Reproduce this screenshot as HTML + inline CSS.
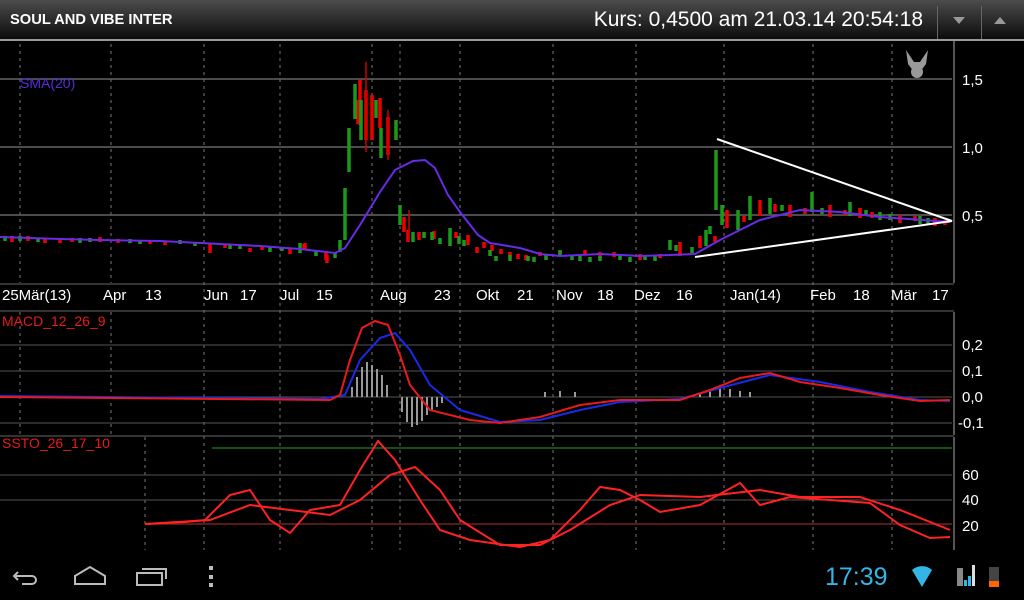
<!DOCTYPE html>
<html><head><meta charset="utf-8"><style>
body{margin:0;width:1024px;height:600px;background:#000;overflow:hidden;font-family:"Liberation Sans",sans-serif;position:relative}
.top{position:absolute;left:0;top:0;width:1024px;height:39px;background:linear-gradient(#4c4c4c,#0c0c0c);border-bottom:2px solid #9a9a9a}
.t1{position:absolute;left:10px;top:11px;color:#fff;font-weight:bold;font-size:15px;transform:scaleX(.98);transform-origin:left}
.t2{position:absolute;right:101px;top:8px;color:#fff;font-size:21px;transform:scaleX(1.0);transform-origin:right}
.sep{position:absolute;top:6px;width:1px;height:33px;background:#666}
.ax{position:absolute;color:#fff;font-size:15px}
.xl{position:absolute;top:287px;color:#fff;font-size:15px}
.lab{position:absolute;font-size:14px}
</style></head><body>
<div class="top"><div class="t1">SOUL AND VIBE INTER</div><div class="t2">Kurs: 0,4500 am 21.03.14 20:54:18</div>
<div class="sep" style="left:937px"></div><div class="sep" style="left:981px"></div>
<svg style="position:absolute;left:950px;top:15px" width="70" height="12"><path d="M3 2h12l-6 7z" fill="#999"/><path d="M44 9h12l-6-7z" fill="#999"/></svg></div>
<svg style="position:absolute;left:0;top:0" width="1024" height="600">
<g stroke="#777" stroke-dasharray="3,4" stroke-width="1">
<path d="M20 44V283M111 44V283M204 44V550M280 44V550M372 44V550M400 44V550M460 44V550M553 44V550M636 44V550M724 44V550M813 44V550M892 44V550M145 437V550"/>
<path d="M20 312V435M111 312V435"/>
</g>
<g stroke="#666" stroke-width="1.5"><path d="M0 79H952M0 147H952M0 215H952"/></g>
<g stroke="#555"><path d="M0 345H952M0 371H952M0 397H952M0 423H952M0 475H952M0 500H952"/></g>
<path d="M954 41V283M954 312V435M954 437V550" stroke="#aaa"/>
<path d="M0 284H954M0 311H954M0 436H954" stroke="#666"/>
<path d="M212 448H952" stroke="#1a6a1a" stroke-width="1.5"/>
<path d="M145 524H952" stroke="#7a2020" stroke-width="1.5"/>
<!-- candles -->
<g stroke-width="3.5">
<path stroke="#e00" d="M12 236v6M28 236v5M45 238v5M60 239v4M72 238v4M100 237v5M118 239v4M150 240v4M165 241v4M210 243v10M225 244v4M250 248v4M262 246v4M290 248v6M304 244v6M326 252v8M305 243v6M327 255v8M358 100v24M360 80v45M366 90v50M372 95v45M380 98v30M388 117v38M404 217v15M408 230v12M419 232v8M434 231v8M456 232v6M468 235v10M477 247v6M484 242v6M492 245v6M501 249v5M510 252v5M518 254v5M526 255v5M540 252v4M560 251v4M585 250v4M600 252v6M614 252v5M640 254v6M660 254v4M680 242v14M700 236v12M715 236v6M727 210v18M744 216v6M760 200v16M775 204v8M790 205v12M805 208v6M830 205v12M845 210v5M860 208v10M872 212v6M900 215v8M915 216v5M935 218v8M945 220v5"/>
<path stroke="#1a9a1a" d="M5 236v5M20 236v5M38 238v4M80 238v5M90 238v4M130 239v4M140 240v4M180 240v4M195 242v4M230 244v5M240 245v4M270 247v5M282 247v4M300 243v10M316 250v6M335 252v6M340 240v12M345 188v52M349 128v44M355 84v35M361 100v40M376 100v18M381 128v30M396 120v20M400 205v20M413 232v10M424 232v6M432 232v8M440 238v6M450 228v18M459 236v8M464 240v6M490 250v6M496 256v5M510 255v6M528 256v5M534 257v5M546 255v5M560 250v6M572 255v5M580 256v5M590 257v5M600 256v5M620 255v5M630 257v5M645 255v5M655 256v5M670 240v10M676 245v6M692 247v6M706 230v16M710 226v8M716 150v60M722 205v20M738 210v20M750 196v24M770 198v16M782 205v6M812 192v20M822 208v6M850 202v14M866 210v6M880 212v8M890 214v6M920 216v8M928 218v6"/>
<path stroke="#c00" stroke-width="1.5" d="M366 62v90M388 110v50M409 210v30"/>
</g>
<polyline fill="none" stroke="#6a2ae8" stroke-width="2" points="0,237 60,239 100,240 160,241 200,243 260,246 300,249 335,253 345,248 360,225 380,192 395,170 413,161 425,160 435,168 448,195 460,212 478,235 490,243 520,248 540,254 560,256 600,254 640,256 670,255 695,254 720,240 760,220 800,210 840,212 880,217 950,222"/>
<path d="M717 139L952 221L695 257" fill="none" stroke="#fff" stroke-width="2"/>
<!-- MACD -->
<g stroke="#999" stroke-width="2"><path d="M352 397v-10M357 397v-20M362 397v-30M367 397v-35M372 397v-32M377 397v-28M382 397v-22M387 397v-12M402 397v15M407 397v25M412 397v30M417 397v28M422 397v24M427 397v18M432 397v14M437 397v10M442 397v6M700 397v-3M710 397v-6M720 397v-10M730 397v-8M740 397v-6M750 397v-5M545 397v-5M560 397v-6M575 397v-5"/></g>
<polyline fill="none" stroke="#1a2ae8" stroke-width="2" points="0,396 320,399 345,395 360,360 380,338 395,333 410,350 430,385 460,410 500,422 540,420 580,410 620,402 680,399 720,388 770,375 820,382 870,392 920,400 950,401"/>
<polyline fill="none" stroke="#e81a1a" stroke-width="2" points="0,397 330,400 340,395 350,360 362,328 375,321 388,325 400,355 410,385 430,410 470,420 500,423 540,417 580,405 620,400 680,400 710,390 740,378 770,373 800,382 840,388 880,395 920,401 950,400"/>
<!-- SSTO -->
<polyline fill="none" stroke="#f22" stroke-width="2" points="145,524 185,522 205,520 230,495 250,490 270,520 290,533 310,510 340,505 360,470 378,441 395,460 420,500 440,530 470,540 520,547 550,540 580,510 600,487 620,490 640,500 660,512 700,505 740,483 760,505 790,497 830,500 870,503 900,525 930,538 950,537"/>
<polyline fill="none" stroke="#f22" stroke-width="2" points="145,524 210,520 250,505 290,510 330,515 360,500 390,475 415,467 440,490 460,520 500,545 540,545 570,530 610,505 640,495 700,497 760,490 800,497 860,497 900,510 950,530"/>
<!-- logo -->
<path d="M906 50l8 12h6l8-12l-2 14l-6 8h-6l-6-8z" fill="#999"/><circle cx="917" cy="72" r="6" fill="#999"/>
<!-- nav -->
<g stroke="#bbb" stroke-width="2" fill="none">
<path d="M18 572l-4 4l4 4M14 576h18a4 4 0 0 1 0 8h-10"/>
<path d="M75 584v-8l15-9l15 9v8z"/>
<path d="M137 573h25v12h-25zM142 569h24v10"/>
</g>
<g fill="#bbb"><rect x="209" y="566" width="4" height="4"/><rect x="209" y="575" width="4" height="4"/><rect x="209" y="583" width="4" height="4"/></g>
<path d="M912 570a15 15 0 0 1 20 0l-10 17z" fill="#33b5e5"/>
<rect x="957" y="568" width="6" height="18" fill="#888"/><path d="M964 586v-6h3v6zM968 586v-10h3v10z" fill="#33b5e5"/><rect x="972" y="565" width="3" height="21" fill="#ddd"/>
<rect x="989" y="567" width="10" height="20" fill="#444"/><rect x="989" y="581" width="10" height="6" fill="#f60"/>
</svg>
<div class="ax" style="left:962px;top:72px">1,5</div>
<div class="ax" style="left:962px;top:140px">1,0</div>
<div class="ax" style="left:962px;top:208px">0,5</div>
<div class="ax" style="left:962px;top:337px">0,2</div>
<div class="ax" style="left:962px;top:363px">0,1</div>
<div class="ax" style="left:962px;top:389px">0,0</div>
<div class="ax" style="left:958px;top:415px">-0,1</div>
<div class="ax" style="left:962px;top:467px">60</div>
<div class="ax" style="left:962px;top:492px">40</div>
<div class="ax" style="left:962px;top:518px">20</div>
<div class="xl" style="left:2px">25Mär(13)</div><div class="xl" style="left:103px">Apr</div><div class="xl" style="left:145px">13</div>
<div class="xl" style="left:204px">Jun</div><div class="xl" style="left:240px">17</div><div class="xl" style="left:280px">Jul</div><div class="xl" style="left:316px">15</div>
<div class="xl" style="left:380px">Aug</div><div class="xl" style="left:434px">23</div><div class="xl" style="left:476px">Okt</div><div class="xl" style="left:517px">21</div>
<div class="xl" style="left:556px">Nov</div><div class="xl" style="left:597px">18</div><div class="xl" style="left:634px">Dez</div><div class="xl" style="left:676px">16</div>
<div class="xl" style="left:730px">Jan(14)</div><div class="xl" style="left:810px">Feb</div><div class="xl" style="left:853px">18</div><div class="xl" style="left:891px">Mär</div><div class="xl" style="left:932px">17</div>
<div class="lab" style="left:20px;top:75px;color:#5a2ae0">SMA(20)</div>
<div class="lab" style="left:2px;top:313px;color:#e81a1a">MACD_12_26_9</div>
<div class="lab" style="left:2px;top:435px;color:#e81a1a">SSTO_26_17_10</div>
<div style="position:absolute;left:825px;top:563px;color:#33b5e5;font-size:25px">17:39</div>
</body></html>
